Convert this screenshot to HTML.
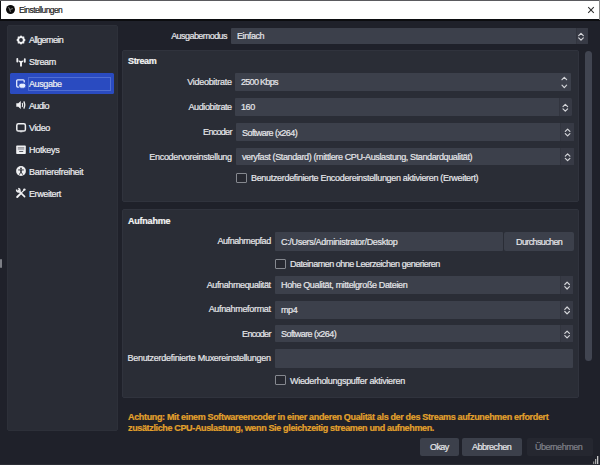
<!DOCTYPE html>
<html><head><meta charset="utf-8"><style>
html,body{margin:0;padding:0;}
body{width:600px;height:465px;overflow:hidden;background:#1f212a;position:relative;font-family:"Liberation Sans",sans-serif;}
div,span{box-sizing:border-box;}
.a{position:absolute;}
.t{position:absolute;font-size:9px;line-height:10px;white-space:nowrap;letter-spacing:-0.36px;color:#e6e7ea;-webkit-text-stroke:0.2px currentColor;}
.r{text-align:right;}
.b{font-weight:bold;letter-spacing:-0.1px;color:#f4f4f4;}
.f{position:absolute;background:#3c404b;border-radius:1px;}
.dv{position:absolute;background:#373a45;border-left:1px solid #32353f;border-radius:0 1.5px 1.5px 0;}
.cb{position:absolute;width:11px;height:10px;border:1.6px solid #85888f;background:#262830;border-radius:1px;}
.grp{position:absolute;background:#2a2d36;border:1px solid #30333d;border-radius:2px;}
.btn{position:absolute;background:#3c404b;border-radius:2px;}
svg{position:absolute;overflow:visible;}
</style></head><body>
<div class="a" style="left:0;top:0;width:600px;height:21px;background:#0c0d10;"></div>
<div class="a" style="left:0;top:0;width:600px;height:1px;background:#5a5a5e;"></div>
<div class="a" style="left:1px;top:1px;width:598px;height:18px;background:#ffffff;"></div>
<div class="a" style="left:599px;top:0;width:1px;height:20px;background:#8c8c8c;"></div>
<svg style="left:6px;top:5px" width="9" height="9" viewBox="0 0 9 9"><circle cx="4.5" cy="4.5" r="4.45" fill="#0a0a0a"/><path d="M2.6 2.2 L3.6 4.2 L4.4 6.8 M4.2 4.4 L6.8 3.6" stroke="#9a9a9a" stroke-width="0.9" fill="none"/></svg>
<div class="t" style="left:19px;top:4.5px;font-size:8.5px;color:#1c1c1c;letter-spacing:-0.6px;">Einstellungen</div>
<svg style="left:587.5px;top:6.5px" width="6" height="6" viewBox="0 0 6 6"><path d="M0.2 0.2L5.8 5.8M5.8 0.2L0.2 5.8" stroke="#303030" stroke-width="1.05"/></svg>
<div class="a" style="left:7px;top:25px;width:111px;height:406px;background:#292c35;border:1px solid #2d3039;border-radius:2px;"></div>
<div class="a" style="left:10px;top:72.5px;width:104px;height:21px;background:#2a4bc0;border-radius:1.5px;"></div>
<div class="a" style="left:28px;top:76.5px;width:83px;height:14px;border:1.3px solid #506ed2;"></div>
<div class="t" style="left:29px;top:35px;letter-spacing:-0.6px;color:#eeeff1;">Allgemein</div>
<div class="t" style="left:29px;top:57px;letter-spacing:-0.36px;color:#eeeff1;">Stream</div>
<div class="t" style="left:29px;top:79px;letter-spacing:-0.4px;color:#eeeff1;">Ausgabe</div>
<div class="t" style="left:29px;top:101px;letter-spacing:-0.64px;color:#eeeff1;">Audio</div>
<div class="t" style="left:29px;top:123px;letter-spacing:-0.4px;color:#eeeff1;">Video</div>
<div class="t" style="left:29px;top:145px;letter-spacing:-0.3px;color:#eeeff1;">Hotkeys</div>
<div class="t" style="left:29px;top:167px;letter-spacing:-0.3px;color:#eeeff1;">Barrierefreiheit</div>
<div class="t" style="left:29px;top:189px;letter-spacing:-0.4px;color:#eeeff1;">Erweitert</div>
<svg style="left:16px;top:34.5px" width="10" height="10" viewBox="0 0 10 10"><path fill-rule="evenodd" fill="#f0f1f3" d="M5 0.3 L6.3 1.5 L8.2 1.6 L8.4 3.6 L9.7 5 L8.4 6.4 L8.2 8.4 L6.3 8.5 L5 9.7 L3.7 8.5 L1.8 8.4 L1.6 6.4 L0.3 5 L1.6 3.6 L1.8 1.6 L3.7 1.5 Z M5 3.1 A1.9 1.9 0 1 0 5 6.9 A1.9 1.9 0 1 0 5 3.1 Z"/></svg>
<svg style="left:16px;top:56.5px" width="10" height="10" viewBox="0 0 10 10"><rect x="0.4" y="1" width="1.8" height="4.6" rx="0.8" fill="#f0f1f3"/><rect x="7.9" y="1.3" width="1.8" height="4.4" rx="0.8" fill="#f0f1f3"/><path d="M2.6 3.3 Q5 4.6 7.4 3.3 L7.4 4.6 Q6 5.3 6 6 L5.9 9.6 L4.1 9.6 L4 6 Q4 5.3 2.6 4.6 Z" fill="#f0f1f3"/></svg>
<svg style="left:16px;top:78.5px" width="10" height="10" viewBox="0 0 10 10"><path d="M3 8 L1.6 8 Q0.7 8 0.7 7 L0.7 1.7 Q0.7 0.8 1.6 0.8 L7.2 0.8 Q8.2 0.8 8.2 1.7 L8.2 3.6" fill="none" stroke="#e4ecff" stroke-width="1.3"/><rect x="2.8" y="4.2" width="7" height="5" rx="2.3" fill="#e8f0ff" stroke="#2a4bc0" stroke-width="0.8"/></svg>
<svg style="left:16px;top:100px" width="10" height="10" viewBox="0 0 10 10"><path d="M0.3 3.2 L2.3 3.2 L4.8 0.9 L4.8 9.1 L2.3 6.8 L0.3 6.8 Z" fill="#f0f1f3"/><path d="M6.2 3 Q7.2 5 6.2 7" fill="none" stroke="#f0f1f3" stroke-width="1.1"/><path d="M7.8 1.4 Q9.8 5 7.8 8.6" fill="none" stroke="#f0f1f3" stroke-width="1.2"/></svg>
<svg style="left:16px;top:122.5px" width="10" height="10" viewBox="0 0 10 10"><rect x="0.8" y="0.8" width="8.6" height="7.2" rx="1.6" fill="none" stroke="#f0f1f3" stroke-width="1.5"/><rect x="3.8" y="8.2" width="2.6" height="1.2" fill="#f0f1f3" opacity="0.6"/></svg>
<svg style="left:16px;top:144.5px" width="10" height="10" viewBox="0 0 10 10"><rect x="0.2" y="0.6" width="9.6" height="8.4" rx="0.8" fill="#f0f1f3"/><rect x="1.7" y="2.5" width="6.6" height="0.9" fill="#4a4d55"/><rect x="1.7" y="4.3" width="6.6" height="0.8" fill="#9a9ca3"/><rect x="3.2" y="6" width="4" height="1" fill="#5a5d65"/></svg>
<svg style="left:16px;top:166.2px" width="10" height="10" viewBox="0 0 10 10"><circle cx="5" cy="5" r="4.9" fill="#f0f1f3"/><circle cx="5" cy="2.3" r="0.85" fill="#1c1e25"/><rect x="2.2" y="3.5" width="5.6" height="0.9" fill="#1c1e25"/><rect x="4.3" y="3.6" width="1.4" height="3" fill="#1c1e25"/><path d="M4.6 6.3 L3.4 8.6 M5.4 6.3 L6.6 8.6" stroke="#1c1e25" stroke-width="0.9"/></svg>
<svg style="left:16px;top:188px" width="10" height="10" viewBox="0 0 10 10"><path d="M1.2 9 L4.6 5.6" stroke="#f0f1f3" stroke-width="2" stroke-linecap="round"/><path d="M4.6 5.6 L8.2 2" stroke="#f0f1f3" stroke-width="1.1"/><circle cx="8.4" cy="1.6" r="1.2" fill="#f0f1f3"/><path d="M2.6 2.6 L8.6 8.6" stroke="#f0f1f3" stroke-width="1.6" stroke-linecap="round"/><path d="M0.6 1.6 Q0.6 4 2.6 4 Q4 4 4 2.4 Q4 0.6 2.2 0.4" fill="none" stroke="#f0f1f3" stroke-width="1.5"/></svg>
<div class="t r" style="right:373px;top:31px;letter-spacing:-0.56px;">Ausgabemodus</div>
<div class="f" style="left:231px;top:27.7px;width:356.5px;height:16.8px;"></div>
<div class="dv" style="left:575.5px;top:27.7px;width:12px;height:16.8px;"></div>
<div class="t" style="left:237px;top:31px;letter-spacing:-0.4px;">Einfach</div>
<svg style="left:0;top:0" width="600" height="465"><path d="M578.70 35.70 L581.00 33.40 L583.30 35.70 M578.70 37.90 L581.00 40.20 L583.30 37.90" fill="none" stroke="#d4d5d9" stroke-width="1.2" stroke-linecap="round" stroke-linejoin="round"/></svg>
<div class="grp" style="left:122px;top:50.2px;width:457px;height:152px;"></div>
<div class="t b" style="left:128px;top:56px;letter-spacing:-0.36px;">Stream</div>
<div class="t r" style="right:368.3px;top:76.5px;letter-spacing:-0.28px;">Videobitrate</div>
<div class="f" style="left:235.3px;top:72.5px;width:336px;height:18.4px;"></div>
<div class="t" style="left:241px;top:77.2px;letter-spacing:-0.7px;">2500 Kbps</div>
<svg style="left:0;top:0" width="600" height="465"><path d="M562.00 79.70 L564.30 77.30 L566.60 79.70 M562.00 85.20 L564.30 87.60 L566.60 85.20" fill="none" stroke="#d4d5d9" stroke-width="1.2" stroke-linecap="round" stroke-linejoin="round"/></svg>
<div class="t r" style="right:368.3px;top:101.5px;letter-spacing:-0.4px;">Audiobitrate</div>
<div class="f" style="left:235.3px;top:97.8px;width:336.2px;height:18.4px;"></div>
<div class="dv" style="left:558.5px;top:97.8px;width:13px;height:18.4px;"></div>
<div class="t" style="left:241px;top:102.3px;letter-spacing:-0.4px;">160</div>
<svg style="left:0;top:0" width="600" height="465"><path d="M563.00 106.60 L565.30 104.30 L567.60 106.60 M563.00 108.80 L565.30 111.10 L567.60 108.80" fill="none" stroke="#d4d5d9" stroke-width="1.2" stroke-linecap="round" stroke-linejoin="round"/></svg>
<div class="t r" style="right:368.3px;top:127px;letter-spacing:-0.7px;">Encoder</div>
<div class="f" style="left:235.8px;top:122.9px;width:338px;height:17.9px;"></div>
<div class="dv" style="left:560.3px;top:122.9px;width:13.5px;height:17.9px;"></div>
<div class="t" style="left:242px;top:127.5px;letter-spacing:-0.56px;">Software (x264)</div>
<svg style="left:0;top:0" width="600" height="465"><path d="M565.30 131.45 L567.60 129.15 L569.90 131.45 M565.30 133.65 L567.60 135.95 L569.90 133.65" fill="none" stroke="#d4d5d9" stroke-width="1.2" stroke-linecap="round" stroke-linejoin="round"/></svg>
<div class="t r" style="right:368.3px;top:152px;letter-spacing:-0.32px;">Encodervoreinstellung</div>
<div class="f" style="left:235.8px;top:147.9px;width:338px;height:17.4px;"></div>
<div class="dv" style="left:560.3px;top:147.9px;width:13.5px;height:17.4px;"></div>
<div class="t" style="left:242px;top:152px;letter-spacing:-0.38px;">veryfast (Standard) (mittlere CPU-Auslastung, Standardqualit&auml;t)</div>
<svg style="left:0;top:0" width="600" height="465"><path d="M565.30 156.20 L567.60 153.90 L569.90 156.20 M565.30 158.40 L567.60 160.70 L569.90 158.40" fill="none" stroke="#d4d5d9" stroke-width="1.2" stroke-linecap="round" stroke-linejoin="round"/></svg>
<div class="cb" style="left:236px;top:173px;"></div>
<div class="t" style="left:251px;top:172.5px;letter-spacing:-0.32px;">Benutzerdefinierte Encodereinstellungen aktivieren (Erweitert)</div>
<div class="grp" style="left:122px;top:209.3px;width:457px;height:188.7px;"></div>
<div class="t b" style="left:128px;top:216px;letter-spacing:-0.22px;">Aufnahme</div>
<div class="t r" style="right:329.3px;top:236px;letter-spacing:-0.44px;">Aufnahmepfad</div>
<div class="f" style="left:275px;top:231.5px;width:227.5px;height:19px;"></div>
<div class="t" style="left:281px;top:236.5px;letter-spacing:-0.32px;">C:/Users/Administrator/Desktop</div>
<div class="btn" style="left:504.2px;top:232.4px;width:70px;height:18.4px;"></div>
<div class="t" style="left:516px;top:237px;letter-spacing:-0.62px;">Durchsuchen</div>
<div class="cb" style="left:275px;top:259px;"></div>
<div class="t" style="left:290px;top:259px;letter-spacing:-0.48px;">Dateinamen ohne Leerzeichen generieren</div>
<div class="t r" style="right:329.3px;top:279.5px;letter-spacing:-0.38px;">Aufnahmequalit&auml;t</div>
<div class="f" style="left:275px;top:276.2px;width:298.3px;height:17.4px;"></div>
<div class="dv" style="left:559.8px;top:276.2px;width:13.5px;height:17.4px;"></div>
<div class="t" style="left:281px;top:280px;letter-spacing:-0.36px;">Hohe Qualit&auml;t, mittelgro&szlig;e Dateien</div>
<svg style="left:0;top:0" width="600" height="465"><path d="M564.80 284.50 L567.10 282.20 L569.40 284.50 M564.80 286.70 L567.10 289.00 L569.40 286.70" fill="none" stroke="#d4d5d9" stroke-width="1.2" stroke-linecap="round" stroke-linejoin="round"/></svg>
<div class="t r" style="right:329.3px;top:304px;letter-spacing:-0.32px;">Aufnahmeformat</div>
<div class="f" style="left:275px;top:300.5px;width:298.3px;height:18.4px;"></div>
<div class="dv" style="left:559.8px;top:300.5px;width:13.5px;height:18.4px;"></div>
<div class="t" style="left:281px;top:304.5px;letter-spacing:-0.4px;">mp4</div>
<svg style="left:0;top:0" width="600" height="465"><path d="M564.80 309.30 L567.10 307.00 L569.40 309.30 M564.80 311.50 L567.10 313.80 L569.40 311.50" fill="none" stroke="#d4d5d9" stroke-width="1.2" stroke-linecap="round" stroke-linejoin="round"/></svg>
<div class="t r" style="right:329.3px;top:328.5px;letter-spacing:-0.7px;">Encoder</div>
<div class="f" style="left:275px;top:325.1px;width:298.3px;height:17.4px;"></div>
<div class="dv" style="left:559.8px;top:325.1px;width:13.5px;height:17.4px;"></div>
<div class="t" style="left:281px;top:329px;letter-spacing:-0.56px;">Software (x264)</div>
<svg style="left:0;top:0" width="600" height="465"><path d="M564.80 333.40 L567.10 331.10 L569.40 333.40 M564.80 335.60 L567.10 337.90 L569.40 335.60" fill="none" stroke="#d4d5d9" stroke-width="1.2" stroke-linecap="round" stroke-linejoin="round"/></svg>
<div class="t r" style="right:329.3px;top:353px;letter-spacing:-0.28px;">Benutzerdefinierte Muxereinstellungen</div>
<div class="f" style="left:275px;top:348.5px;width:298.3px;height:19.4px;"></div>
<div class="cb" style="left:275px;top:375px;"></div>
<div class="t" style="left:290px;top:375.5px;letter-spacing:-0.3px;">Wiederholungspuffer aktivieren</div>
<div class="a" style="left:584.5px;top:51px;width:7.5px;height:310px;background:#414551;border-radius:3.5px;"></div>
<div class="t b" style="left:128px;top:411.8px;letter-spacing:-0.34px;color:#e3a12c;">Achtung: Mit einem Softwareencoder in einer anderen Qualit&auml;t als der des Streams aufzunehmen erfordert</div>
<div class="t b" style="left:128px;top:422.5px;letter-spacing:-0.35px;color:#e3a12c;">zus&auml;tzliche CPU-Auslastung, wenn Sie gleichzeitig streamen und aufnehmen.</div>
<div class="btn" style="left:419.5px;top:437.5px;width:39.5px;height:18.5px;"></div>
<div class="t" style="left:430px;top:442px;letter-spacing:-0.6px;">Okay</div>
<div class="btn" style="left:462px;top:437.5px;width:60px;height:18.5px;"></div>
<div class="t" style="left:472px;top:442px;letter-spacing:-0.48px;">Abbrechen</div>
<div class="btn" style="left:526.5px;top:438px;width:66.5px;height:18px;background:#252730;"></div>
<div class="t" style="left:535px;top:442px;letter-spacing:-0.48px;color:#80828a;">&Uuml;bernehmen</div>
<svg style="left:590px;top:455px" width="10" height="10" viewBox="0 0 10 10"><rect x="7" y="1" width="1.3" height="8" fill="#c8c8c8"/><rect x="5" y="4" width="1.3" height="5" fill="#aaaaaa"/><rect x="3" y="6.5" width="1.3" height="2.5" fill="#888"/></svg>
<div class="a" style="left:0;top:259px;width:2px;height:9px;background:#7d7f86;border-radius:1px;filter:blur(0.6px);"></div>
<div class="a" style="left:0;top:464px;width:600px;height:1px;background:#2b2d35;"></div>
</body></html>
